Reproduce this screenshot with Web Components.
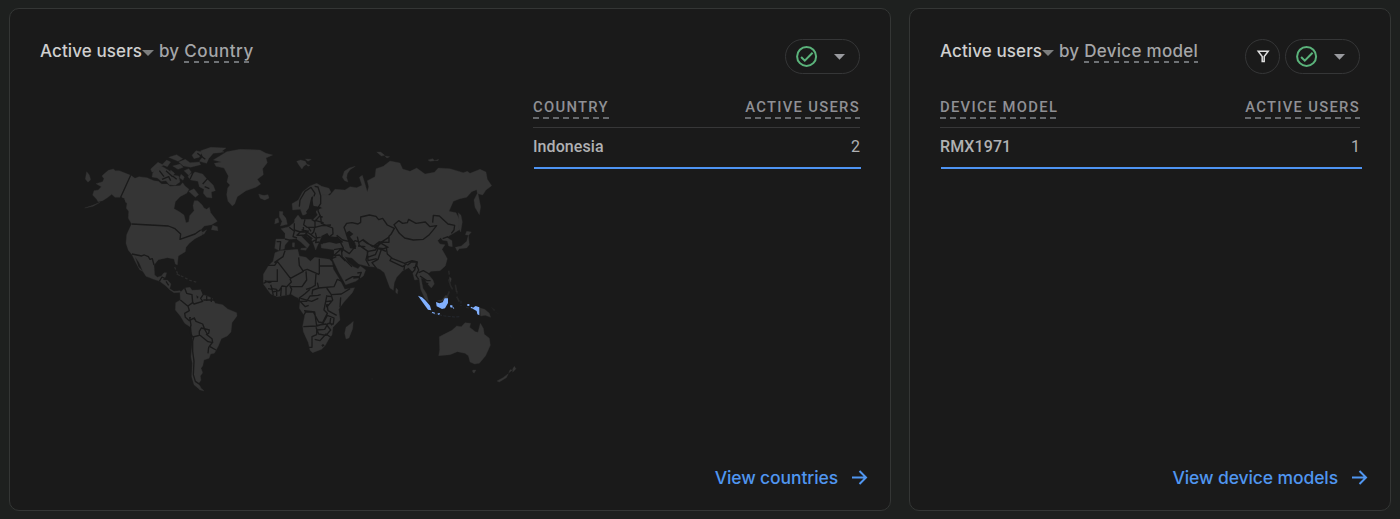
<!DOCTYPE html>
<html lang="en"><head><meta charset="utf-8"><title>Reports snapshot</title>
<style>
html,body{margin:0;height:519px;overflow:hidden;background:#1e201f}
</style></head><body>
<report-grid>
<report-card metric="Active users" dimension="Country" link="View countries" style="--dim-ls:.58px">
<world-map slot="visual"></world-map>
<data-table slot="table" dim="COUNTRY" name="Indonesia" value="2"></data-table>
</report-card>
<report-card metric="Active users" dimension="Device model" link="View device models" filter style="--bar-end:-2px">
<data-table slot="table" dim="DEVICE MODEL" name="RMX1971" value="1"></data-table>
</report-card>
</report-grid>
<script>
const define=(tag,html)=>customElements.define(tag,class extends HTMLElement{
  connectedCallback(){
    if(this.shadowRoot)return;
    const r=this.attachShadow({mode:'open'});
    r.innerHTML=html(this);
  }
});
define('report-grid',()=>`<style>
:host{display:grid;grid-template-columns:882px 482px;gap:18px;padding:8px 9px;height:503px;box-sizing:content-box}
</style><slot></slot>`);

define('status-pill',()=>`<style>
:host{display:flex;box-sizing:border-box;width:75px;height:35px;border:1px solid #353637;border-radius:18px}
svg{display:block}</style>
<svg width="73" height="33" viewBox="0 0 73 33"><circle cx="20.6" cy="16.4" r="9.5" fill="none" stroke="#5bb37b" stroke-width="2"/><path d="M15.1 17l3.7 3.7 7.8-8" fill="none" stroke="#5bb37b" stroke-width="2"/><path d="M48 14h11l-5.500 5.800z" fill="#9a9b9f"/></svg>`);

define('filter-button',()=>`<style>
:host{display:flex;box-sizing:border-box;width:35px;height:35px;border:1px solid #353637;border-radius:50%}
svg{display:block}</style>
<svg width="33" height="33" viewBox="0 0 33 33"><path d="M12.200 11.200h10l-4 5.300v5h-2v-5z" fill="none" stroke="#dedede" stroke-width="1.500"/></svg>`);

define('report-card',e=>`<style>
:host{display:flex;flex-direction:column;box-sizing:border-box;height:503px;border:1px solid #343635;border-radius:10px;background:#1a1a1a;padding:30px;min-width:0}
header{display:flex;justify-content:space-between;height:35px}
.title{display:flex;font:500 17px/24px Inter,sans-serif;color:#a5a6a8;white-space:pre;letter-spacing:.1px}
.metric{color:#cfcfcf}
.title svg{margin:11px 5px 0 0}
.dim{height:22px;background:repeating-linear-gradient(90deg,#6f7276 0 5px,transparent 5px 10px) 0 22px/100% 2px no-repeat;padding-bottom:2px;margin-left:5px;letter-spacing:var(--dim-ls,.28px)}
.tools{display:flex;gap:5px}
main{display:flex;flex:1;min-height:0}
::slotted(world-map){flex:none;width:493px}
::slotted(data-table){flex:1;min-width:0}
footer{display:flex;justify-content:flex-end;align-items:center;height:24px;margin:0 -8px -10px 0;color:#5096f0;font:500 17.500px/24px Inter,sans-serif;letter-spacing:-.1px;gap:13px}
footer svg{position:relative;top:-.5px}
</style>
<header><div class="title"><span class="metric">${e.getAttribute('metric')}</span><svg width="12" height="6"><path d="M0 0h12l-6 6z" fill="#7d7e7e"/></svg><span>by</span><span class="dim">${e.getAttribute('dimension')}</span></div>
<div class="tools">${e.hasAttribute('filter')?'<filter-button></filter-button>':''}<status-pill></status-pill></div></header>
<main><slot name="visual"></slot><slot name="table"></slot></main>
<footer><span>${e.getAttribute('link')}</span><svg width="17" height="16" viewBox="0 0 17 16"><path d="M1 7.500h14M8.500 1l6.500 6.500L8.500 14" fill="none" stroke="#5096f0" stroke-width="2"/></svg></footer>`);

define('data-table',e=>`<style>
:host{display:block;font-family:Roboto,sans-serif;color:#b0b1b3}
.head{display:flex;justify-content:space-between;box-sizing:border-box;height:54px;padding-top:24px;border-bottom:1px solid #373738;font-weight:500;font-size:14.800px;line-height:18px;letter-spacing:1.300px;color:#8f9095}
.head span{height:21px;background:repeating-linear-gradient(90deg,#66696d 0 6px,transparent 6px 10px) 0 19px/100% 2px no-repeat}
.row{display:flex;justify-content:space-between;height:39px;line-height:37px;font-size:16px}
.name{font-weight:500;font-size:16px;letter-spacing:.08px}
.bar{height:2px;background:#4e94f3;margin:0 var(--bar-end,-1px) 0 1px}
</style>
<div class="head"><span>${e.getAttribute('dim')}</span><span>ACTIVE USERS</span></div>
<div class="row"><span class="name">${e.getAttribute('name')}</span><span>${e.getAttribute('value')}</span></div><div class="bar"></div>`);

define('world-map',()=>`<style>
:host{display:block}
svg{display:block;margin:66px 0 0 40px}
.l{fill:#353535;stroke:#353535;stroke-width:1}
.s{fill:#1a1a1a;stroke:none}
.b{fill:none;stroke:#1a1a1a;stroke-width:4;stroke-linejoin:round}
.i{fill:#82b1ff}
</style>
<svg width="440" height="260" viewBox="80 140 440 260">
<!-- North America and Greenland -->
<g transform="translate(80 140) scale(.33333)">
<path class="l" d="M72 102L85 91 100 87 106 92 118 92 152 106 122 172 105 172 95 163 84 172 68 182 54 185 50 178 38 165 42 152 55 150 64 140 48 131 68 125 72 116 66 108Z M20 95l8 10 4 14-8 8-8-10z M14 204l24-8 22-9-21 12z"/>
<path class="l" d="M152 106L165 115 177 110 201 113 222 122 235 124 245 132 262 132 270 139 300 137 308 128 315 138 327 148 320 160 300 170 286 185 282 206 296 214 312 225 318 248 326 246 329 227 342 212 339 197 343 182 353 182 366 194 372 204 380 208 388 202 392 218 412 244 395 254 373 258 362 270 368 277 380 269 372 283 362 280 345 282 300 298 302 282 285 266 265 258 155 252 145 235 146 214 139 205 141 190 135 185 133 175 122 172Z"/>
<path class="l" d="M155 252L265 258 285 266 302 282 300 298 345 282 362 270 368 284 345 296 328 310 318 322 316 335 295 348 292 375 286 372 282 357 262 353 235 359 222 375 224 405 232 412 244 408 252 398 260 398 256 412 248 420 263 421 273 432 269 446 282 454 300 452 304 457 282 458 270 450 258 438 239 424 221 418 198 409 188 393 178 369 165 350 175 380 188 394 179 389 166 365 156 344 145 331 138 310 140 284 150 262Z M398 256l14 4 2 12-20-3z"/>
<path class="l" d="M218 100l10-16 20-4 20 12 14 14 14 2 4 18-14 10-18-2-10-12-14 2-12-10-16-3z M216 97l-4-10 22-20 16 8-12 12z M246 74l14-14 12 6-10 14z M266 52l24-8 18 12-14 8z M278 78l22-6 10 10-16 6z M296 66l20-8 14 10 28-2 4 8-30 8-22-4z M336 46l12-14 18 4-8 16-16 4z M362 32l30-10 46 2-18 14-20 2-14 16-6 14-22-6 10-14z M312 92l14-6 8 10-8 10z M328 104l18-8 22 6 12 14 20 20 6 16-12 4 2 18-16-2-10-12 2-12-14-8-4-16-22-4-8-10z M326 154l16-8 14 18-10 8z M303 103l10 8-4 10-10-8z M272 90l12 10-4 6-10-6z M416 38l8-6 8 4z"/>
<path class="l" d="M400 60L440 35 480 28 540 30 558 40 578 45 558 54 562 68 548 86 550 104 532 118 542 132 528 142 498 152 472 170 464 192 457 198 444 184 440 164 443 144 450 135 441 126 445 108 432 84 408 79 403 70 424 66Z M536 162l16 5 12-3 3 9-13 6-14-6z"/>
<path class="b" d="M152 106L122 172 135 185M155 252L265 258 285 266 302 282 300 298 345 282 362 270M156 342l29 6 8-3 12 5 5 8 7-2 5 19M238 424l8-13 8 4M258 424l8 12M386 112l-18 20M258 92l20 18M238 92l14 18M340 96l-10 22M352 40l24 18M246 118l20-8 6 12M374 140l14 6M290 118l-12-10"/>
<path d="M284 381l8 18 8 8M290 402l20 9 20 10 20 6" fill="none" stroke="#2b2b2b" stroke-width="4" stroke-dasharray="8 6"/>
</g>
<!-- South America -->
<g transform="translate(120 260) scale(.33333)">
<path class="l" d="M166 150L167 128 181 120 180 98 194 84 210 82 216 91 244 89 250 104 276 114 286 130 308 134 323 147 350 158 351 168 336 188 333 216 322 228 304 236 295 258 283 280 272 282 267 295 252 300 248 318 243 325 248 338 241 348 243 361 236 370 244 386 236 386 222 374 215 350 217 310 213 290 218 240 214 203 194 190 181 168Z M236 384l10 2 6 7-14-4z"/>
<path class="b" d="M194 84l6 16 16 4 2 24-14 10 4 14-14 8 2 12 12 10 12-7 6 4M181 120l22 18M244 89l6 14-8 12 6 9-26 8-5-6M260 108l0 15M274 112l0 14M250 120l37 0M222 172l6 12 20 8 6 16 8 14 4-2 2-10-24-6-6 10 0 12-20 5-6-10-2-14 3-12-4-22 4 0M222 230l-4 14 0 30 4 30-2 40 6 20 18 12M258 222l18 14 2 12-14-3-24-19M278 246l-12 16-2 18M270 260l18 10"/>
<path class="s" d="M229 106l7 5-5 5z"/>
</g>
<!-- Eurasia -->
<g transform="translate(250 140) scale(.33333)">
<path class="l" d="M140 64l12-4 14 4 4 8-10 8-4 7-8-10z M166 57l18 1-10 6z M168 72l12 4-6 3z M380 36l12 0 12 10-10 2z M405 48l14 2-8 4z M534 60l14-4 6 6-14 2z M554 62l12-4-2 4z M277 112l6-18 15-10 18-5-16 10-8 12-2 12 4 13-10-4z"/>
<path class="l" d="M128 210L126 191 145 180 158 155 180 138 200 130 215 139 237 145 243 157 230 168 215 163 240 166 246 158 255 148 285 150 300 140 320 143 336 136 328 112 337 106 344 128 352 156 356 140 352 122 375 110 378 86 400 79 420 63 450 69 458 87 480 94 500 84 525 102 553 97 565 84 600 86 640 98 652 94 660 100 690 88 708 96 712 118 725 137 708 150 698 165 684 161 692 200 688 224 675 202 672 180 682 160 680 149 665 155 650 172 630 176 610 184 597 214 618 218 632 245 627 270 612 279 590 292 606 302 607 320 596 318 592 303 578 301 572 293 563 302 570 312 585 314 576 328 592 356 586 378 570 392 543 394 534 402 549 420 553 432 544 444 531 430 524 418 513 414 519 445 530 462 536 486 524 475 512 448 508 418 494 420 487 395 476 383 458 392 440 412 433 428 430 451 420 444 403 398 390 388 373 381 352 379 326 372 306 354 284 350 294 366 310 380 324 386 331 378 347 390 340 408 317 424 287 434 266 396 248 358 252 346 252 329 214 324 213 312 247 305 280 306 262 289 240 297 224 287 212 296 206 309 197 330 188 305 168 286 154 289 179 314 172 325 153 307 139 296 120 298 105 315 103 327 86 331 74 325 78 297 105 297 105 280 93 266 117 260 133 247 134 238 144 225 154 238 165 238 190 238 203 225 196 212 217 204 192 199 184 190 178 214 165 224 158 226 151 208Z"/>
<path class="l" d="M88 214l11 1-1 8 10 12 4 18-21 5 5-14-8-14z M76 237l8-3 3 13-13 5z M30 165l12 2 10-2 4 10-12 5-14-6z M625 218l8 8 4 20-5 30-5-10 0-26z M650 274l14 2-8 10-10-2z M655 286l3 28-8 10-22 2-6 8-6-12 18-4 16-14z M153 325l18-2-3 8-16-2z M127 308l7 0-1 14-6-2z M438 444l6 6-2 12-5-5z"/>
<path class="s" d="M214 288l18-9 6 10 20 2 22 16-22 4-22-6-22 4z M286 280l12-8 12 10-10 8 16 20 2 17-18-2-6-22z M184 172l6-4-2 12 2 18 14 2 11 1-14 8-8 14-8 3-12-3-5-8 8-10z"/>
<path class="b" d="M148 200l2-20 15-26 18-12 12 18-3 9M194 139l10 2 8 26 0 24-8 12M206 200l-2 12 8 18 2 20 14 6 20 8 1 18-13 10M165 238l-4 16 10 8 24 0 0-18-10-6M195 241l22 6 4 3M195 262l20-5 28-2M193 246l15-17 10 2M133 250l0 20 18 6 10-3-1-12M118 262l15 12-4 16 12 4M151 276l20 0 12 8 8-8 3-12M151 276l-10 10 30-1 14 16M171 284l16 12M183 284l13 10 16-2M196 278l4 16-3 14 10-2M175 262l8 12M80 305l12 0-3 26M105 297l20 5M162 288l14-16M187 305l12-6M155 269l20 5M216 305l0 8M260 286l18 14 18 4M270 304l10 20-4 12M252 329l22-4 24 16 20-24M274 325l2 25 30 30M252 346l22-20"/>
<path class="b" d="M288 278l-6-16 8-12 16-2 18 4 8-5 0-16 26-6 20 4 8 10 12-4 14 20 21 10-10 18-6 6 0 18-30-1-16 12-20-8-14-10-8 6-14-4-8 6 6 16M432 254l14-12 12 8 14-2 4-10 22 12 28-4 14 14 20-3-12 15-12 14-16 12-30 2-26-6-16-14z M548 248l2-22 18 2 26 24 20 4-2 14-8 10M322 290l6 26 26 18 22-4 16-22 24-16M354 334l-6 26 10 18M324 318l22 2M338 298l30 22 16-2 4-14M376 318l18-8 20 12-14 4-28-4M352 352l24-8 8-18 22 6M352 334l2 28 26-6M380 386l-14-18 18-10 10-30 14 6M408 318l4 24 16 14 36 14 22-8 16 4-2 12-10 6M424 354l-4 8 38 18 12-8M464 374l-2 16M472 376l12-10 16 0-6 24-8 8M500 376l6 14-8 16 8 12M506 398l14-6 18 10M510 408l20 14 12 0M535 430l-16 2M578 296l16-6"/>
<path d="M596 392l2 12M596 418l6 20 6 10M616 434l4 22M598 454l-8 20M620 470l8 15" fill="none" stroke="#272727" stroke-width="5"/>
</g>
<!-- Africa and Arabia -->
<g transform="translate(250 230) scale(.33333)">
<path class="l" d="M75 68L90 62 108 61 143 58 148 78 168 82 181 94 194 82 238 88 246 96 250 118 264 140 278 166 284 178 314 173 307 188 282 216 266 238 270 270 249 292 246 315 237 326 226 346 215 358 188 368 180 361 175 338 160 305 158 288 164 258 148 235 150 216 144 203 136 200 124 193 82 200 62 192 40 162 40 133 55 108 69 94Z M302 281l8-7-2 22-11 28-9 3-4-17 4-18z"/>
<path class="b" d="M105 62l-6 18-26 20M54 106l26 6 2 42-30 0-12 6M82 118l38 28 4 10-14 14-14-2-8 14-22 4M146 82l2 24 10 16-38 20-36-26M72 100l86 22 50 13" style="display:none"/>
<path class="b" d="M105 62l-6 18-26 18M54 106h20l8-12 40 52M82 118l0 36-30 0-12 6M120 146l4 10-14 14-14-2-8 14-22 4M146 82l2 24 12 18-40 22M160 122l12-4 36 16M208 86l0 46M208 108l46 0M168 124l2 26-14 20-36 0M198 132l-2 26 0 8-14 8-14 4M202 158l4 16 46-4 10-22 18 8M180 178l-16 14-16 12 0 10 22 0 10-16 24-2 8-2M206 174l-18 6-2 14M230 174l14 20 30-2 10-6 16-10M244 196l4 14-16 20 2 12 26 14M230 200l-8 40 10 10-14 28-12-2-16-30-26 0M162 242l32 4 6 42-40 2M200 288l18-6 14-26 20 8-2 18-16-2-10 18-24 2 0 14-14 6 0 32-10 0M200 286l28-4 14 18-14 16-22-4-8-20M194 328l16 4 18-20 14 10M242 264l-2 14 6 8M80 178l0 20M94 174l-2 24M108 168l0 28M119 166l6 12-5 18M62 164l4 12 14 2M44 152l14 6 8-4M54 176l12 2 4 18M150 214l16 16 10-4M151 205l34 9 20-9M228 198l18 2M228 215l15-2M228 226l10-2M272 202l-2 30M160 258l8-14"/>
<path class="b" d="M248 77l20-2 18 18M245 86l14-6M286 152l22-12 20 0 0 14M322 129l12-2-6 15-18 2"/>
<path class="s" d="M214 346l5-4 5 4-6 5z M229 222l6 1-2 10-5-2z"/>
</g>
<!-- Oceania and Indonesia -->
<g transform="translate(360 220) scale(.33333)">
<path class="l" d="M238 350L258 340 276 331 290 318 304 320 315 308 332 310 329 322 346 335 354 337 361 310 370 325 373 343 388 355 391 376 377 407 358 430 344 432 330 426 325 407 315 400 292 395 270 404 236 407 239 390Z M338 450l10 0-6 10-4-4z M463 439l5 7-10 11 0-10z M457 450l-11 9 4-10z M445 461l-6 12-21 13-7-3 18-10z M360 264l14 4 14 12 4 12-16-6-14 2z M232 242l14-2 12-15 5 7-4 6-7 2-10 5z M269 170l5 6-2 11-4-10z"/>
<path class="l" d="M394 262l12 8-4 3z M406 276l10 6M448 345l8 8 M289 214l5 0-1 8-5-3z" opacity=".35"/>
<path class="i" d="M174 227l12 5 10 9 14 16 4 14-10-2-13-18z M216 275l9 3-2 5-7-3z M233 280h7v4h-7z M228 246l10 4 10-3 6-12h10l0 14-9 16-9 2-10-5-6-3z M270 256l7 0 1 7-7-1z M279 261l4 4-4 1z M322 252h6v6h-6z M333 260l7 3v3l-8-2z M341 262l6-4 11 4 0 24-6-3-2-10-12-7z"/>
<path d="M212 279l24 5 18 4 30 3 16-1M303 242v16M318 262l14 3" fill="none" stroke="#24282e" stroke-width="3" stroke-dasharray="9 4"/>
<path d="M34 477h6M498 331h5" stroke="#222" stroke-width="3"/>
</g>
</svg>`);
</script>
</body></html>
